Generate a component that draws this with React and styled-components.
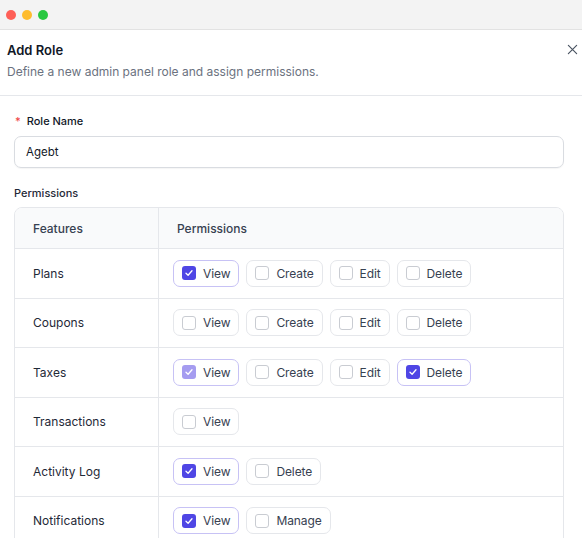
import React from "react";
import styled, { createGlobalStyle } from "styled-components";

const GlobalStyle = createGlobalStyle`
  html, body {
    margin: 0;
    padding: 0;
    background: #ffffff;
  }
  body {
    font-family: Inter, "Noto Sans", "Liberation Sans", sans-serif;
    color: #111827;
    overflow: hidden;
  }
`;

const Window = styled.div`
  width: 582px;
  height: 538px;
  display: flex;
  flex-direction: column;
  background: #fff;
  overflow: hidden;
`;

const TitleBar = styled.div`
  height: 30px;
  flex-shrink: 0;
  display: flex;
  align-items: center;
  gap: 6px;
  padding-left: 6px;
  background: #f3f3f3;
  border-bottom: 1px solid #e2e2e2;
  box-sizing: border-box;
`;

const Light = styled.span`
  width: 10px;
  height: 10px;
  border-radius: 50%;
  background: ${(p) => p.color};
`;

const Header = styled.div`
  position: relative;
  padding: 11px 7px 15px;
  border-bottom: 1px solid #e5e7eb;
`;

const Title = styled.div`
  font-size: 13px;
  font-weight: 600;
  line-height: 18px;
  color: #111827;
`;

const Subtitle = styled.div`
  margin-top: 4px;
  font-size: 12px;
  line-height: 17px;
  color: #6b7280;
`;

const Close = styled.button`
  position: absolute;
  top: 11px;
  right: 2px;
  width: 16px;
  height: 16px;
  padding: 0;
  border: none;
  background: none;
  display: flex;
  align-items: center;
  justify-content: center;
  color: #4b5563;
`;

const Body = styled.div`
  padding: 18px 18px 0 14px;
`;

const Label = styled.div`
  display: flex;
  align-items: center;
  gap: 6px;
  font-size: 11px;
  font-weight: 500;
  line-height: 14px;
  color: #111827;
`;

const Star = styled.span`
  color: #ef4444;
  font-size: 11px;
  padding-left: 1px;
`;

const Input = styled.div`
  margin-top: 8px;
  height: 32px;
  box-sizing: border-box;
  border: 1px solid #d9dce1;
  border-radius: 7px;
  display: flex;
  align-items: center;
  padding: 0 11px;
  font-size: 11.5px;
  color: #111827;
  box-shadow: 0 1px 1px rgba(0, 0, 0, 0.04);
`;

const SectionLabel = styled.div`
  margin-top: 18px;
  font-size: 11px;
  line-height: 14px;
  font-weight: 500;
  color: #1f2937;
`;

const Table = styled.div`
  margin-top: 7px;
  border: 1px solid #e5e7eb;
  border-radius: 8px;
  overflow: hidden;
`;

const Row = styled.div`
  display: grid;
  grid-template-columns: 144px 1fr;
  height: ${(p) => (p.head ? "40px" : "48.5px")};
  background: ${(p) => (p.head ? "#f9fafb" : "#fff")};
  border-top: ${(p) => (p.head ? "none" : "1px solid #e5e7eb")};
`;

const Cell = styled.div`
  display: flex;
  align-items: center;
  gap: 7px;
  padding-left: ${(p) => (p.first ? "18px" : p.head ? "18px" : "14px")};
  border-right: ${(p) => (p.first ? "1px solid #e5e7eb" : "none")};
  font-size: 12px;
  color: ${(p) => (p.head ? "#374151" : "#1f2937")};
  font-weight: ${(p) => (p.head ? 500 : 400)};
`;

const Chip = styled.label`
  height: 27px;
  box-sizing: border-box;
  display: flex;
  align-items: center;
  gap: 7px;
  padding: 0 8px 0 8px;
  border: 1px solid ${(p) => (p.on ? "#c7c2f5" : "#e5e7eb")};
  border-radius: 7px;
  font-size: 12px;
  letter-spacing: -0.1px;
  color: #374151;
  background: #fff;
`;

const Box = styled.span`
  width: 14px;
  height: 14px;
  box-sizing: border-box;
  border-radius: 3px;
  border: 1px solid ${(p) => (p.on ? "transparent" : "#c9ccd2")};
  background: ${(p) => (p.on ? (p.dim ? "#a59cf0" : "#4f46e5") : "#fff")};
  display: flex;
  align-items: center;
  justify-content: center;
`;

const Check = () => (
  <svg width="10" height="10" viewBox="0 0 10 10" fill="none">
    <path d="M2 5.2 L4.1 7.2 L8 2.8" stroke="#fff" strokeWidth="1.3" strokeLinecap="round" strokeLinejoin="round" />
  </svg>
);

const rows = [
  { name: "Plans", perms: [["View", 1], ["Create", 0], ["Edit", 0], ["Delete", 0]] },
  { name: "Coupons", perms: [["View", 0], ["Create", 0], ["Edit", 0], ["Delete", 0]] },
  { name: "Taxes", perms: [["View", 2], ["Create", 0], ["Edit", 0], ["Delete", 1]] },
  { name: "Transactions", perms: [["View", 0]] },
  { name: "Activity Log", perms: [["View", 1], ["Delete", 0]] },
  { name: "Notifications", perms: [["View", 1], ["Manage", 0]] },
];

export default function App() {
  return (
    <Window>
      <GlobalStyle />
      <TitleBar>
        <Light color="#fe5f57" />
        <Light color="#febc2e" />
        <Light color="#28c840" />
      </TitleBar>
      <Header>
        <Title>Add Role</Title>
        <Subtitle>Define a new admin panel role and assign permissions.</Subtitle>
        <Close>
          <svg width="11" height="11" viewBox="0 0 12 12">
            <path d="M1.5 1.5 L10.5 10.5 M10.5 1.5 L1.5 10.5" stroke="currentColor" strokeWidth="1.3" strokeLinecap="round" />
          </svg>
        </Close>
      </Header>
      <Body>
        <Label>
          <Star>*</Star>
          Role Name
        </Label>
        <Input>Agebt</Input>
        <SectionLabel>Permissions</SectionLabel>
        <Table>
          <Row head>
            <Cell first head>Features</Cell>
            <Cell head>Permissions</Cell>
          </Row>
          {rows.map((r) => (
            <Row key={r.name}>
              <Cell first>{r.name}</Cell>
              <Cell>
                {r.perms.map(([label, state]) => (
                  <Chip key={label} on={state > 0}>
                    <Box on={state > 0} dim={state === 2}>
                      {state > 0 && <Check />}
                    </Box>
                    {label}
                  </Chip>
                ))}
              </Cell>
            </Row>
          ))}
        </Table>
      </Body>
    </Window>
  );
}
